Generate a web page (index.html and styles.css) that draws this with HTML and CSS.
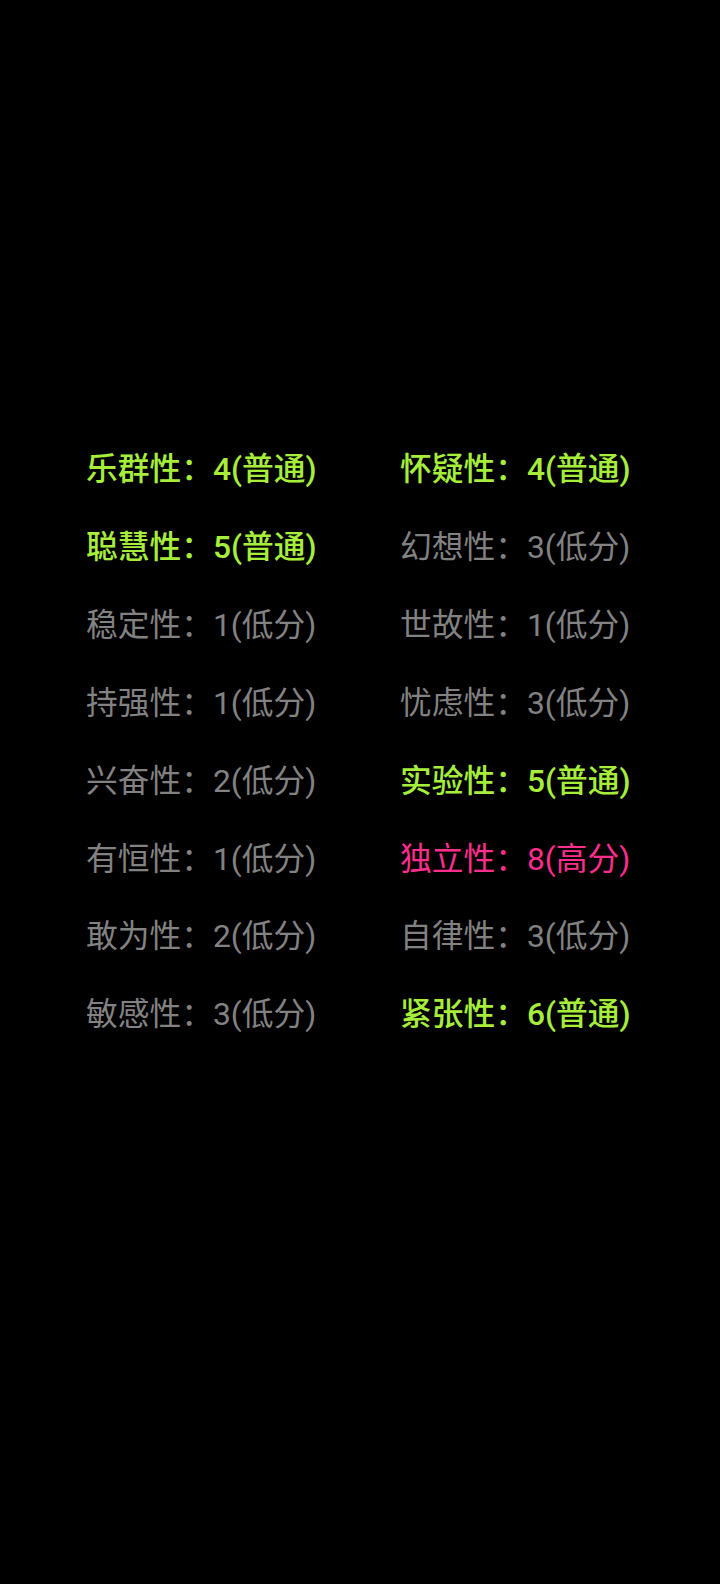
FILE: index.html
```html
<!DOCTYPE html>
<html lang="zh-CN">
<head>
<meta charset="utf-8">
<link rel="stylesheet" href="styles.css">
</head>
<body>
<main class="grid">
  <div class="item mid">乐群性：4(普通)</div>
  <div class="item mid">怀疑性：4(普通)</div>
  <div class="item mid">聪慧性：5(普通)</div>
  <div class="item low">幻想性：3(低分)</div>
  <div class="item low">稳定性：1(低分)</div>
  <div class="item low">世故性：1(低分)</div>
  <div class="item low">持强性：1(低分)</div>
  <div class="item low">忧虑性：3(低分)</div>
  <div class="item low">兴奋性：2(低分)</div>
  <div class="item mid">实验性：5(普通)</div>
  <div class="item low">有恒性：1(低分)</div>
  <div class="item high">独立性：8(高分)</div>
  <div class="item low">敢为性：2(低分)</div>
  <div class="item low">自律性：3(低分)</div>
  <div class="item low">敏感性：3(低分)</div>
  <div class="item mid">紧张性：6(普通)</div>
</main>
</body>
</html>
```
FILE: styles.css
```css
html, body {
  margin: 0;
  padding: 0;
  background: #000;
}
body {
  width: 720px;
  height: 1584px;
  overflow: hidden;
  font-family: Roboto, "Noto Sans CJK SC", sans-serif;
}
.grid {
  display: grid;
  grid-template-columns: 314px 1fr;
  padding: 431px 0 0 86px;
}
.item {
  font-size: 31.75px;
  line-height: 77.9px;
  white-space: nowrap;
}
.mid { color: #a6ed3c; font-weight: 500; }
.low { color: #828282; }
.high { color: #ff2d8c; }
```
